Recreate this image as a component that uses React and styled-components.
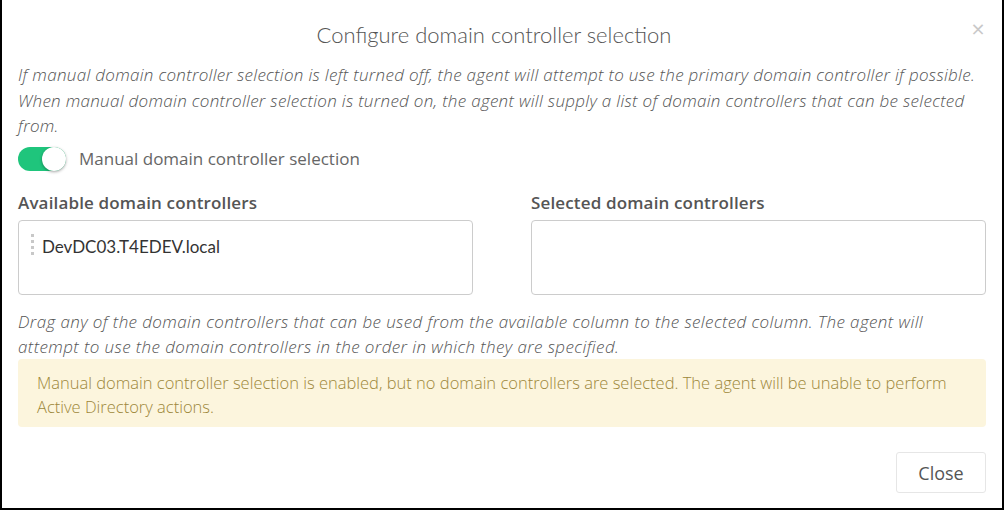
import React from "react";
import styled, { createGlobalStyle } from "styled-components";

const GlobalStyle = createGlobalStyle`
  html, body { margin: 0; padding: 0; background: #fff; }
  body { font-family: "Open Sans", Lato, sans-serif; }
  * { box-sizing: border-box; }
`;

const Modal = styled.div`
  width: 1004px;
  height: 510px;
  background: #fff;
  border: 2px solid #000;
  border-top: none;
  display: flex;
  flex-direction: column;
`;

const Header = styled.div`
  display: flex;
  align-items: flex-start;
  padding: 19px 16px 12px 16px;
`;

const Title = styled.h4`
  flex: 1;
  margin: 0;
  text-align: center;
  font-family: Lato, sans-serif;
  font-size: 22px;
  font-weight: 300;
  line-height: 31px;
  color: #555;
`;

const CloseX = styled.button`
  border: none;
  background: none;
  padding: 0;
  width: 16px;
  font-family: "DejaVu Sans", sans-serif;
  font-size: 18px;
  line-height: 20px;
  color: #c8c8c8;
  cursor: pointer;
`;

const Body = styled.div`
  padding: 0 16px;
  display: flex;
  flex-direction: column;
`;

const Help = styled.p`
  margin: 0;
  font-style: italic;
  font-weight: 300;
  font-size: 17px;
  letter-spacing: ${(p) => p.$ls || "0.3px"};
  line-height: ${(p) => p.$lh || "25.6px"};
  color: #555;
`;

const ToggleRow = styled.label`
  display: flex;
  align-items: center;
  gap: 13px;
  margin-top: 8px;
  height: 24px;
  font-size: 17px;
  color: #666;
`;

const Track = styled.span`
  position: relative;
  width: 48px;
  height: 24px;
  border-radius: 12px;
  background: ${(p) => (p.$on ? "#1fc57c" : "#ccc")};
  flex-shrink: 0;
`;

const Knob = styled.span`
  position: absolute;
  top: 0;
  left: ${(p) => (p.$on ? "24px" : "0")};
  width: 24px;
  height: 24px;
  border-radius: 50%;
  background: #fff;
  box-shadow: 0 1px 3px rgba(0, 0, 0, 0.35);
`;

const Columns = styled.div`
  display: grid;
  grid-template-columns: 455px 455px;
  column-gap: 58px;
  margin-top: 20px;
`;

const Column = styled.div`
  display: flex;
  flex-direction: column;
`;

const ColLabel = styled.div`
  font-size: 17px;
  font-weight: 600;
  letter-spacing: 0.15px;
  line-height: 24px;
  color: #555;
  margin-bottom: 5px;
`;

const ListBox = styled.div`
  height: 75px;
  border: 1px solid #ccc;
  border-radius: 4px;
  padding: 14px 12px;
`;

const Item = styled.div`
  display: flex;
  align-items: center;
  gap: 8px;
  font-family: Lato, sans-serif;
  font-size: 17px;
  line-height: 24px;
  color: #333;
  cursor: move;
`;

const Handle = styled.span`
  display: flex;
  flex-direction: column;
  gap: 3px;
  margin-top: -4px;
  span {
    width: 3px;
    height: 3px;
    background: #c8c8c8;
  }
`;

const DragHelp = styled(Help)`
  margin-top: 14px;
`;

const Alert = styled.div`
  background: #fcf5dd;
  border-radius: 4px;
  padding: 12px 19px 8px 19px;
  font-size: 16.5px;
  line-height: 24px;
  font-weight: 300;
  color: #9c873a;
`;

const Footer = styled.div`
  margin-top: auto;
  display: flex;
  justify-content: flex-end;
  padding: 0 16px 15px 16px;
`;

const Button = styled.button`
  width: 90px;
  height: 41px;
  border: 1px solid #e6e6e6;
  border-radius: 3px;
  background: #fff;
  font-family: inherit;
  font-size: 18px;
  color: #555;
  cursor: pointer;
`;

export default function App() {
  return (
    <>
      <GlobalStyle />
      <Modal>
        <Header>
          <Title>Configure domain controller selection</Title>
          <CloseX aria-label="Close">×</CloseX>
        </Header>
        <Body>
          <Help>
            If manual domain controller selection is left turned off, the agent will attempt to use the primary domain controller if possible. When manual domain controller selection is turned on, the agent will supply a list of domain controllers that can be selected from.
          </Help>
          <ToggleRow>
            <Track $on>
              <Knob $on />
            </Track>
            Manual domain controller selection
          </ToggleRow>
          <Columns>
            <Column>
              <ColLabel>Available domain controllers</ColLabel>
              <ListBox>
                <Item>
                  <Handle>
                    <span />
                    <span />
                    <span />
                    <span />
                  </Handle>
                  DevDC03.T4EDEV.local
                </Item>
              </ListBox>
            </Column>
            <Column>
              <ColLabel>Selected domain controllers</ColLabel>
              <ListBox />
            </Column>
          </Columns>
          <DragHelp $lh="25px" $ls="0.4px">
            Drag any of the domain controllers that can be used from the available column to the selected column. The agent will attempt to use the domain controllers in the order in which they are specified.
          </DragHelp>
          <Alert>
            Manual domain controller selection is enabled, but no domain controllers are selected. The agent will be unable to perform Active Directory actions.
          </Alert>
        </Body>
        <Footer>
          <Button>Close</Button>
        </Footer>
      </Modal>
    </>
  );
}
